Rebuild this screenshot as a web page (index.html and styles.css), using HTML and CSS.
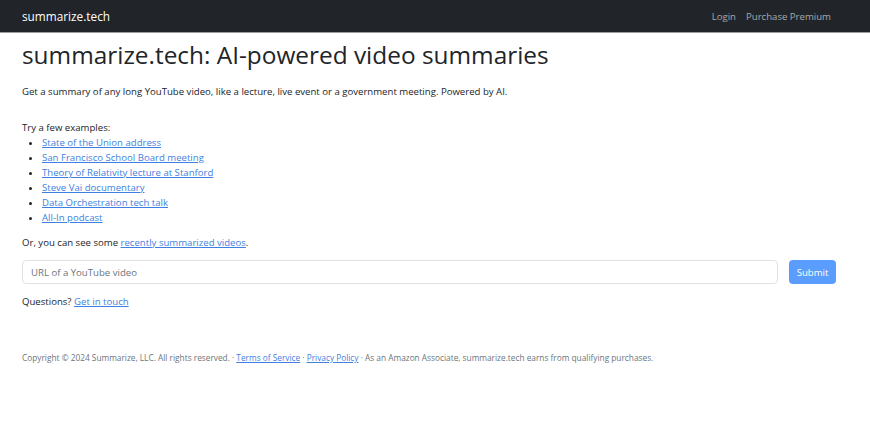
FILE: index.html
```html
<!DOCTYPE html>
<html>
<head>
  <title>summarize.tech: AI-powered video summaries</title>
  <link rel="stylesheet" href="styles.css">
</head>
<body>

  <!-- barra de navegacion -->
  <nav class="navbar">
    <a class="brand" href="#">summarize.tech</a>
    <div class="nav-links">
      <a href="#">Login</a>
      <a href="#">Purchase Premium</a>
    </div>
  </nav>

  <div class="container">
    <h1>summarize.tech: AI-powered video summaries</h1>

    <p class="lead">Get a summary of any long YouTube video, like a lecture, live event or a government meeting. Powered by AI.</p>

    <!-- ejemplos -->
    <div class="examples">
      Try a few examples:
      <ul>
        <li><a href="#">State of the Union address</a></li>
        <li><a href="#">San Francisco School Board meeting</a></li>
        <li><a href="#">Theory of Relativity lecture at Stanford</a></li>
        <li><a href="#">Steve Vai documentary</a></li>
        <li><a href="#">Data Orchestration tech talk</a></li>
        <li><a href="#">All-In podcast</a></li>
      </ul>
    </div>

    <p>Or, you can see some <a href="#">recently summarized videos</a>.</p>

    <!-- formulario -->
    <form class="url-form">
      <input type="text" name="url" placeholder="URL of a YouTube video">
      <button type="submit" disabled>Submit</button>
    </form>

    <p>Questions? <a href="#">Get in touch</a></p>

    <footer class="footer">
      Copyright © 2024 Summarize, LLC. All rights reserved. · <a href="#">Terms of Service</a> · <a href="#">Privacy Policy</a> · As an Amazon Associate, summarize.tech earns from qualifying purchases.
    </footer>
  </div>

</body>
</html>
```

FILE: styles.css
```css
body {
  margin: 0;
  font-family: "Open Sans", "Noto Sans", sans-serif;
  font-size: 9.6px;
  line-height: 15px;
  color: #212529;
  background-color: #fff;
}

a {
  color: #3f7fe0;
}

.navbar {
  display: flex;
  align-items: center;
  justify-content: space-between;
  height: 32px;
  padding: 0 39px 0 22px;
  background-color: #212529;
  border-bottom: 1px solid #9a9c9f;
}

.brand {
  color: #fff;
  font-size: 11.8px;
  text-decoration: none;
}

.nav-links {
  display: flex;
  gap: 10px;
}

.nav-links a {
  color: #a7a9ab;
  font-size: 9.6px;
  text-decoration: none;
}

.container {
  padding: 0 34px 0 22px;
}

h1 {
  margin: 7px 0 0;
  font-size: 24.4px;
  font-weight: 500;
  line-height: 30px;
}

p {
  margin: 0;
}

.lead {
  margin-top: 14px;
}

.examples {
  margin-top: 21px;
}

ul {
  margin: 0;
  padding-left: 20px;
}

.examples + p {
  margin-top: 10px;
}

.url-form {
  display: flex;
  gap: 11px;
  margin: 10px 0;
}

.url-form input {
  flex: 1;
  height: 24px;
  box-sizing: border-box;
  padding: 0 8px;
  border: 1px solid #dee2e6;
  border-radius: 4px;
  font-family: inherit;
  font-size: 9.6px;
  color: #212529;
}

.url-form input::placeholder {
  color: #6c757d;
}

.url-form button {
  width: 47px;
  height: 24px;
  padding: 0;
  border: none;
  border-radius: 4px;
  background-color: #5b9dfc;
  color: #fff;
  font-family: inherit;
  font-size: 9.6px;
}

.footer {
  margin-top: 42px;
  font-size: 8.3px;
  line-height: 13px;
  color: #6c757d;
}

.footer a {
  color: #3f7fe0;
}
```
